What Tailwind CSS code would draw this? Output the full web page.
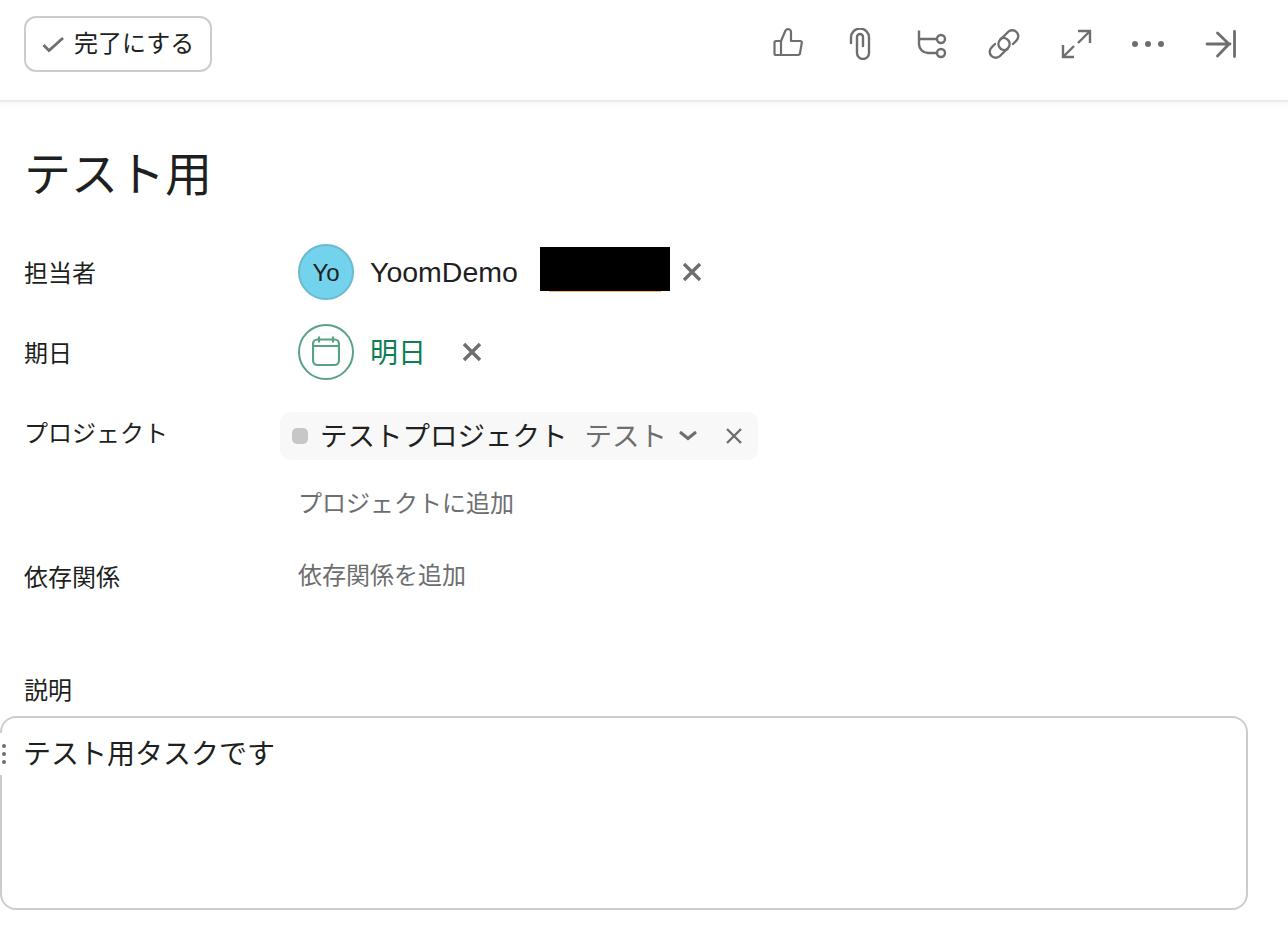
<!DOCTYPE html>
<html lang="ja">
<head>
  <meta charset="UTF-8" />
  <title>テスト用</title>
  <script src="https://cdn.jsdelivr.net/npm/@tailwindcss/browser@4"></script>
</head>
<body class="bg-white text-[#1e1f21] font-['Liberation_Sans','Noto_Sans_CJK_JP',sans-serif]">

  <!-- Toolbar -->
  <header class="h-[102px] border-b-2 border-[#edeaea] shadow-[0_3px_6px_rgba(0,0,0,0.03)] pl-6 pr-8 pb-[12px] flex items-center justify-between">
    <button class="w-[188px] h-[56px] border-2 border-[#cfcbcb] rounded-[12px] flex items-center pl-[16px] gap-[8px] text-2xl">
      <svg class="w-6 h-6 shrink-0 text-[#6d6e6f]" viewBox="0 0 24 24" fill="none" stroke="currentColor" stroke-width="2.8"><path d="M1.5 13L7 18.5 21 6" /></svg>
      <span>完了にする</span>
    </button>
    <div class="flex text-[#6d6e6f]">
      <div class="w-[72px] flex justify-center">
        <svg class="w-8 h-8" viewBox="0 0 32 32" fill="none" stroke="currentColor" stroke-width="2.2" stroke-linejoin="round"><path d="M9 13H4a1.5 1.5 0 0 0-1.5 1.5v11A1.5 1.5 0 0 0 4 27h22a2 2 0 0 0 2-1.8l1.8-10.6a1.5 1.5 0 0 0-1.5-1.6H19V4a3 3 0 0 0-5.5-1.5L9 13zV27" /></svg>
      </div>
      <div class="w-[72px] flex justify-center">
        <svg class="w-8 h-8" viewBox="0 0 32 32" fill="none" stroke="currentColor" stroke-width="2.4" stroke-linecap="round"><path d="M7 15V9.5a9 9 0 0 1 18 0V25a6 6 0 0 1-12 0V9a3 3 0 0 1 6 0V18" /></svg>
      </div>
      <div class="w-[72px] flex justify-center">
        <svg class="w-8 h-8" viewBox="0 0 32 32" fill="none" stroke="currentColor" stroke-width="2.4"><path d="M3 2.5V16a9 9 0 0 0 9 9h9M3 11h18" /><circle cx="25" cy="11" r="4" /><circle cx="25" cy="25" r="4" /></svg>
      </div>
      <div class="w-[72px] flex justify-center">
        <svg class="w-8 h-8" viewBox="0 0 32 32" fill="none" stroke="currentColor" stroke-width="2.4" stroke-linecap="round"><path d="M25 16l3.5-3.5A6 6 0 0 0 20 4l-8 8a6 6 0 0 0 7.3 9.3" /><path d="M7 16l-3.5 3.5A6 6 0 0 0 12 28l8-8a6 6 0 0 0-7.3-9.3" /></svg>
      </div>
      <div class="w-[72px] flex justify-center">
        <svg class="w-8 h-8" viewBox="0 0 32 32" fill="none" stroke="currentColor" stroke-width="2.4"><path d="M18 3h12v12M30 3L18 15M3 17v12h11M3 29l11-11" /></svg>
      </div>
      <div class="w-[72px] flex justify-center">
        <svg class="w-8 h-8" viewBox="0 0 32 32" fill="currentColor"><circle cx="3" cy="16" r="3" /><circle cx="16" cy="16" r="3" /><circle cx="29" cy="16" r="3" /></svg>
      </div>
      <div class="w-[72px] flex justify-center">
        <svg class="w-8 h-8" viewBox="0 0 32 32" fill="none" stroke="currentColor" stroke-width="2.8" stroke-linecap="round"><path d="M3 16h23M13.5 5L25 16 13.5 28M30.5 3.5v25" /></svg>
      </div>
    </div>
  </header>

  <main class="pl-6">
    <h1 class="text-[47px] leading-[60px] mt-[43px] font-normal">テスト用</h1>

    <!-- Assignee -->
    <div class="flex items-center mt-[39px] h-[56px]">
      <div class="w-[274px] text-2xl pt-[3px]">担当者</div>
      <div class="w-[56px] h-[56px] rounded-full bg-[#74d3ec] border-2 border-[#6cb8cf] flex items-center justify-center text-2xl pt-[1px]">Yo</div>
      <span class="ml-[16px] text-[28.5px]">YoomDemo</span>
      <div class="relative self-start mt-[3px] ml-[22px] w-[130px] h-[44px] bg-black">
        <div class="absolute left-[9px] right-[9px] bottom-[-1px] h-[1px] bg-[#f5b65f]"></div>
      </div>
      <svg class="ml-[12px] w-5 h-5 text-[#6d6e6f]" viewBox="0 0 20 20" fill="none" stroke="currentColor" stroke-width="3.4"><path d="M2 2l16 16M18 2L2 18" /></svg>
    </div>

    <!-- Due date -->
    <div class="flex items-center mt-[24px] h-[56px]">
      <div class="w-[274px] text-2xl pt-[3px]">期日</div>
      <div class="w-[56px] h-[56px] rounded-full border-2 border-[#58a182] flex items-center justify-center text-[#58a182]">
        <svg class="w-7 h-8" viewBox="0 0 28 32" fill="none" stroke="currentColor" stroke-width="2.2"><rect x="1" y="3.5" width="26" height="25.5" rx="4.5" /><path d="M1 10h26M7 0.5v6M21 0.5v6" /></svg>
      </div>
      <span class="ml-[16px] text-[28px] text-[#0d7f56] pt-[3px]">明日</span>
      <svg class="ml-[36px] w-5 h-5 text-[#6d6e6f]" viewBox="0 0 20 20" fill="none" stroke="currentColor" stroke-width="3.4"><path d="M2 2l16 16M18 2L2 18" /></svg>
    </div>

    <!-- Project -->
    <div class="flex mt-[32px]">
      <div class="w-[256px] text-2xl leading-[42px] pt-[1px]">プロジェクト</div>
      <div>
        <div class="w-[478px] h-[48px] rounded-[10px] bg-[#f8f8f8] flex items-center pl-[12px]">
          <div class="w-4 h-4 rounded-[5px] bg-[#c7c7c7]"></div>
          <span class="ml-[12px] text-[27.5px] pt-[2px]">テストプロジェクト</span>
          <span class="ml-[17px] text-[27.5px] text-[#6d6e6f] pt-[2px]">テスト</span>
          <svg class="ml-[11px] w-5 h-5 text-[#6d6e6f]" viewBox="0 0 20 20" fill="none" stroke="currentColor" stroke-width="3"><path d="M2 6l8 6.5L18 6" /></svg>
          <svg class="ml-[28px] w-[16px] h-[16px] text-[#6d6e6f]" viewBox="0 0 16 16" fill="none" stroke="currentColor" stroke-width="2.4"><path d="M1 1l14 14M15 1L1 15" /></svg>
        </div>
        <div class="pl-[18px] mt-[26px] text-2xl leading-[36px] text-[#6d6e6f]">プロジェクトに追加</div>
      </div>
    </div>

    <!-- Dependencies -->
    <div class="flex mt-[36px]">
      <div class="w-[274px] text-2xl leading-[36px] pt-[2px]">依存関係</div>
      <div class="text-2xl leading-[36px] text-[#6d6e6f]">依存関係を追加</div>
    </div>

    <div class="text-2xl leading-[36px] mt-[76px] pt-[1px] -mb-[1px]">説明</div>
  </main>

  <!-- Description -->
  <div class="relative mt-[8px] w-[1248px] h-[194px] border-2 border-[#cfcbcb] rounded-[16px] pl-[21px] pt-[17px] text-[28px] leading-[40px]">
    テスト用タスクです
    <div class="absolute left-[-2px] top-[15px] w-[8px] h-[42px] bg-white flex flex-col items-center justify-center gap-[4px]">
      <div class="w-1 h-1 rounded-full bg-[#6d6e6f]"></div>
      <div class="w-1 h-1 rounded-full bg-[#6d6e6f]"></div>
      <div class="w-1 h-1 rounded-full bg-[#6d6e6f]"></div>
    </div>
  </div>
</body>
</html>
